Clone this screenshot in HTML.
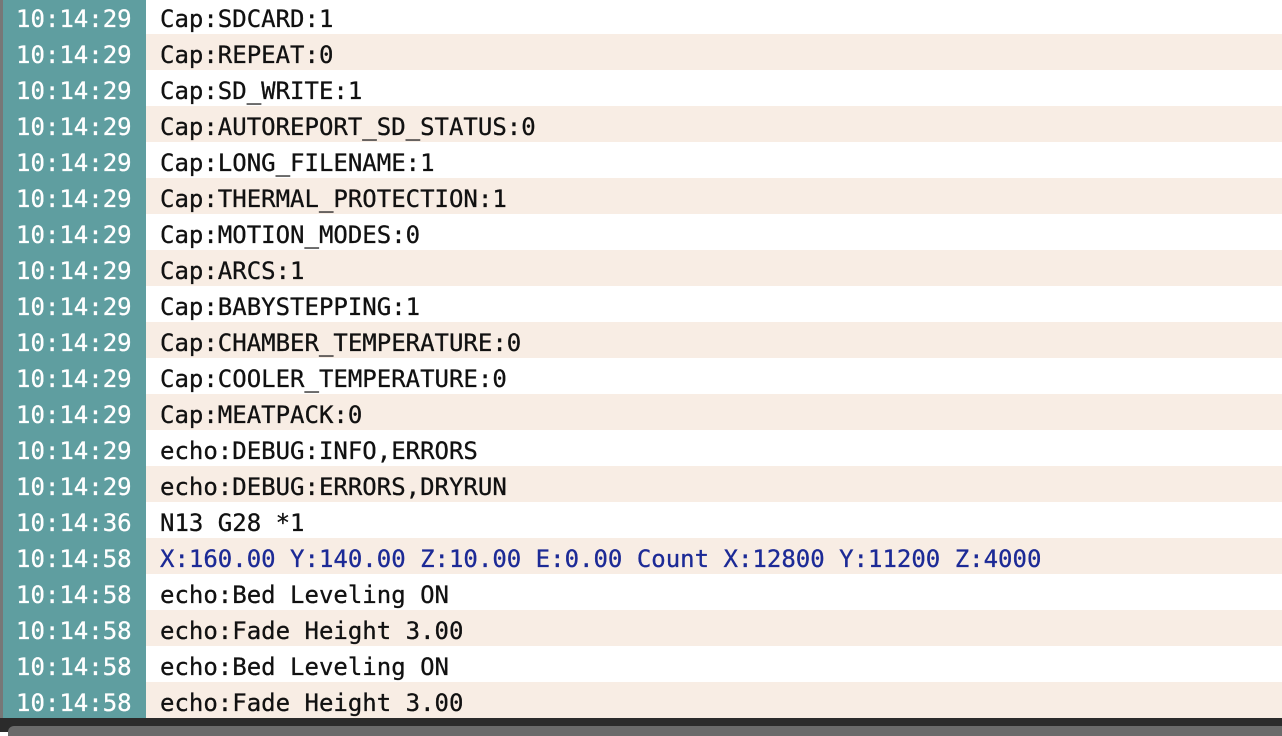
<!DOCTYPE html>
<html><head><style>
html,body{margin:0;padding:0;width:1282px;height:732px;overflow:hidden;background:#fff;}
.wrap{position:absolute;left:0;top:-2px;width:1282px;}
.row{height:36px;display:flex;font-family:"DejaVu Sans Mono","Liberation Mono",monospace;font-size:24px;line-height:36px;}
.t,.m{padding-top:3px;height:36px;box-sizing:border-box;}
.t{width:143px;margin-left:3px;background:#5f9ea0;color:#fff;padding-left:13px;-webkit-text-stroke:0.3px #fff;}
.m{flex:1;padding-left:14px;color:#111;-webkit-text-stroke:0.3px #111;}
.row:nth-child(even) .m{background:#f8ede4;}
.m.b{color:#1c2a96;-webkit-text-stroke:0.3px #1c2a96;}
.lb{position:absolute;left:0;top:0;width:3px;height:718px;background:#777;}
.bar{position:absolute;left:0;top:718px;width:1282px;height:14px;background:#2b2b2b;}
.bar2{position:absolute;left:8px;top:726px;width:1274px;height:10px;background:#6a6a6a;border-radius:6px 0 0 0;}
</style></head><body>
<div class="lb"></div>
<div class="wrap">
<div class="row"><div class="t">10:14:29</div><div class="m">Cap:SDCARD:1</div></div>
<div class="row"><div class="t">10:14:29</div><div class="m">Cap:REPEAT:0</div></div>
<div class="row"><div class="t">10:14:29</div><div class="m">Cap:SD_WRITE:1</div></div>
<div class="row"><div class="t">10:14:29</div><div class="m">Cap:AUTOREPORT_SD_STATUS:0</div></div>
<div class="row"><div class="t">10:14:29</div><div class="m">Cap:LONG_FILENAME:1</div></div>
<div class="row"><div class="t">10:14:29</div><div class="m">Cap:THERMAL_PROTECTION:1</div></div>
<div class="row"><div class="t">10:14:29</div><div class="m">Cap:MOTION_MODES:0</div></div>
<div class="row"><div class="t">10:14:29</div><div class="m">Cap:ARCS:1</div></div>
<div class="row"><div class="t">10:14:29</div><div class="m">Cap:BABYSTEPPING:1</div></div>
<div class="row"><div class="t">10:14:29</div><div class="m">Cap:CHAMBER_TEMPERATURE:0</div></div>
<div class="row"><div class="t">10:14:29</div><div class="m">Cap:COOLER_TEMPERATURE:0</div></div>
<div class="row"><div class="t">10:14:29</div><div class="m">Cap:MEATPACK:0</div></div>
<div class="row"><div class="t">10:14:29</div><div class="m">echo:DEBUG:INFO,ERRORS</div></div>
<div class="row"><div class="t">10:14:29</div><div class="m">echo:DEBUG:ERRORS,DRYRUN</div></div>
<div class="row"><div class="t">10:14:36</div><div class="m">N13 G28 *1</div></div>
<div class="row"><div class="t">10:14:58</div><div class="m b">X:160.00 Y:140.00 Z:10.00 E:0.00 Count X:12800 Y:11200 Z:4000</div></div>
<div class="row"><div class="t">10:14:58</div><div class="m">echo:Bed Leveling ON</div></div>
<div class="row"><div class="t">10:14:58</div><div class="m">echo:Fade Height 3.00</div></div>
<div class="row"><div class="t">10:14:58</div><div class="m">echo:Bed Leveling ON</div></div>
<div class="row"><div class="t">10:14:58</div><div class="m">echo:Fade Height 3.00</div></div>
</div>
<div class="bar"></div><div class="bar2"></div>
</body></html>
